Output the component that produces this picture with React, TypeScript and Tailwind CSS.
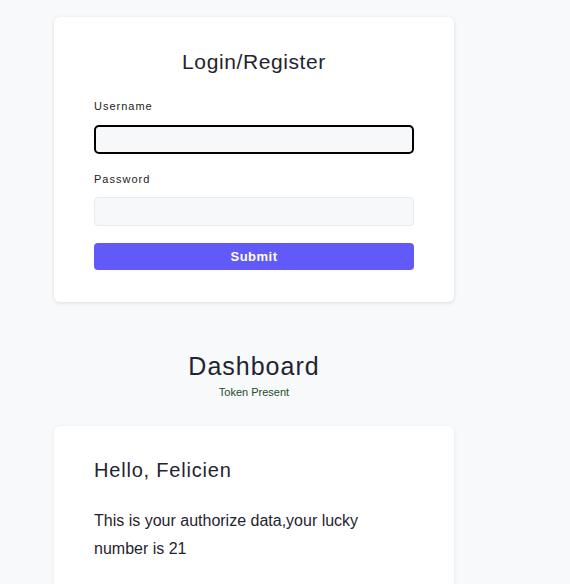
import { useState } from 'react';

export default function App() {
  const [username, setUsername] = useState('');
  const [password, setPassword] = useState('');

  return (
    <div className="min-h-screen bg-[#f8f9fb] font-['Liberation_Sans',Arial,sans-serif] text-[#1f2430]">
      <div className="ml-[54px] w-[400px] pt-[17px]">
        {/* Login card */}
        <div className="rounded-md bg-white px-10 pt-[31px] pb-8 shadow-[0_1px_4px_rgba(0,0,0,0.12)]">
          <h2 className="text-center text-[21px] leading-7 tracking-[0.6px]">Login/Register</h2>

          <form className="mt-[22px]" onSubmit={(e) => e.preventDefault()}>
            <label className="block text-[11px] leading-4 tracking-[1px] text-[#222]">Username</label>
            <input
              autoFocus
              value={username}
              onChange={(e) => setUsername(e.target.value)}
              className="mt-[11px] block h-[29px] w-full rounded-[5px] border-2 border-black bg-[#f7f8fa] px-3 text-sm caret-black outline-none"
            />

            <label className="mt-[17px] block text-[11px] leading-4 tracking-[1px] text-[#222]">Password</label>
            <input
              type="password"
              value={password}
              onChange={(e) => setPassword(e.target.value)}
              className="mt-[10px] block h-[29px] w-full rounded-[4px] border border-[#e8eaee] bg-[#f7f8fa] px-3 text-sm outline-none"
            />

            <button
              type="submit"
              className="mt-[17px] block h-[27px] w-full rounded-[4px] bg-[#615af8] text-[13px] font-bold tracking-[0.5px] text-white"
            >
              Submit
            </button>
          </form>
        </div>

        {/* Dashboard */}
        <div className="mt-[48px] text-center">
          <h1 className="text-[25px] leading-8 tracking-[1px]">Dashboard</h1>
          <p className="mt-[2px] text-[11px] leading-4 text-[#1d4d2a]">Token Present</p>
        </div>

        <div className="mt-[26px] rounded-md bg-white px-10 pt-[30px] pb-10 shadow-[0_1px_4px_rgba(0,0,0,0.08)]">
          <h3 className="text-[20px] leading-7 tracking-[0.8px]">Hello, Felicien</h3>
          <p className="mt-[23px] w-[280px] text-[16px] leading-7">
            This is your authorize data,your lucky number is 21
          </p>
        </div>
      </div>
    </div>
  );
}
